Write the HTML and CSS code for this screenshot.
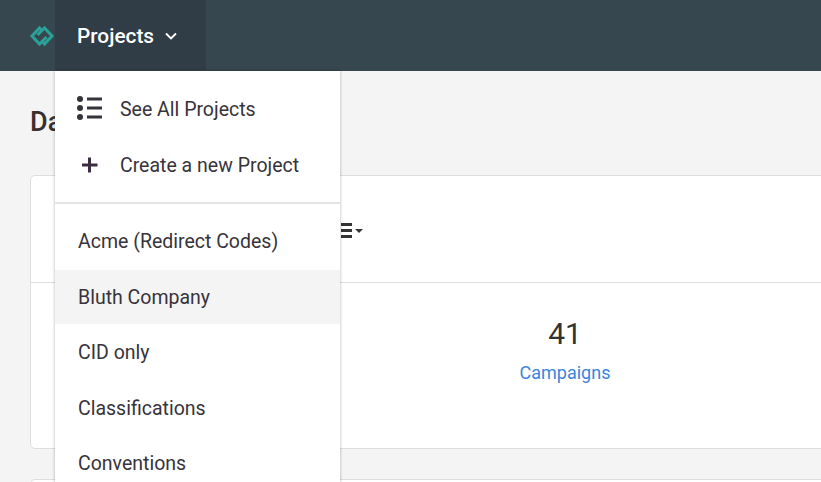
FILE: index.html
```html
<!DOCTYPE html>
<html lang="en">
<head>
<meta charset="utf-8">
<title>Dashboard</title>
<link rel="stylesheet" href="styles.css">
</head>
<body>
<header class="topbar">
  <a class="logo" href="#">
    <svg width="26" height="24" viewBox="0 0 26 24"><path d="M17.500 13 L10.500 20 L3 12 L10.500 4 L12 5.500 M8.500 11 L15.500 4 L23 12 L15.500 20 L14 18.500" fill="none" stroke="#2aa198" stroke-width="3"/></svg>
  </a>
  <button class="nav-active">Projects
    <svg class="chev" width="12" height="8" viewBox="0 0 12 8"><path d="M1 1.500 L6 6.500 L11 1.500" fill="none" stroke="#fff" stroke-width="1.900"/></svg>
  </button>
</header>
<main class="page">
  <h1 class="title">Dashboard</h1>
  <section class="card">
    <div class="card-head">
      <span class="menu-btn">
        <svg width="24" height="16" viewBox="0 0 24 16"><path d="M1 1.500H12M1 7.500H12M1 13.500H12" stroke="#333" stroke-width="3"/><path d="M15 6H23L19 10Z" fill="#333"/></svg>
      </span>
    </div>
    <div class="stats">
      <div class="stat"></div>
      <div class="stat"><div class="num">41</div><a class="stat-link" href="#">Campaigns</a></div>
    </div>
  </section>
  <section class="card"></section>
</main>
<nav class="dropdown">
  <div class="actions">
    <a class="item" href="#">
      <svg class="ico ico-list" width="25" height="24" viewBox="0 0 25 24"><circle cx="3" cy="3" r="3" fill="#37333b"/><circle cx="3" cy="12" r="3" fill="#37333b"/><circle cx="3" cy="21" r="3" fill="#37333b"/><path d="M10 3H25M10 12H25M10 21H25" stroke="#37333b" stroke-width="3"/></svg>
      See All Projects</a>
    <a class="item item-create" href="#">
      <svg class="ico" width="25" height="16" viewBox="0 0 25 16"><path d="M4 8H19.500M11.500 0.500V15.500" stroke="#3d2c42" stroke-width="3"/></svg>
      Create a new Project</a>
  </div>
  <div class="projects">
    <a class="item" href="#">Acme (Redirect Codes)</a>
    <a class="item is-hover" href="#">Bluth Company</a>
    <a class="item" href="#">CID only</a>
    <a class="item" href="#">Classifications</a>
    <a class="item" href="#">Conventions</a>
  </div>
</nav>
</body>
</html>
```
FILE: styles.css
```css
* { box-sizing: border-box; }
html, body { margin: 0; height: 100%; overflow: hidden; }
body { background: #f4f4f4; font-family: Roboto, sans-serif; color: #333; width: 821px; height: 482px; position: relative; }
.topbar { height: 71px; background: #37474f; display: flex; align-items: stretch; padding-left: 29px; }
.logo { width: 26px; display: flex; align-items: center; }
.nav-active { width: 151px; height: 70px; border: 0; background: #303c46; color: #fff; font: 500 20.8px Roboto, sans-serif; padding: 2px 0 0 22px; display: flex; align-items: center; text-align: left; }
.chev { margin-left: 11px; margin-top: 0; }
.page { padding: 0 0 0 30px; width: 1300px; }
.title { margin: 0; height: 104px; padding-top: 34px; font: 500 27px/34px Roboto, sans-serif; color: #3a2f2f; }
.card { background: #fff; border: 1px solid #ddd; border-radius: 5px; height: 274px; margin-bottom: 30px; }
.card-head { height: 107px; border-bottom: 1px solid #ddd; padding-left: 309px; padding-top: 47px; }
.menu-btn { display: block; line-height: 0; }
.stats { display: grid; grid-template-columns: 354px 360px 1fr; }
.stat { text-align: center; padding-top: 32px; }
.num { font-size: 30px; line-height: 38px; color: #333; }
.stat-link { display: block; margin-top: 9px; font-size: 18px; line-height: 22px; color: #3a85dc; text-decoration: none; }
.dropdown { position: absolute; left: 55px; top: 71px; width: 285px; height: 440px; background: #fff; box-shadow: 0 0 3px rgba(0,0,0,.3); }
.actions { height: 133px; padding-top: 11px; border-bottom: 2px solid #e4e4e4; display: flex; flex-direction: column; gap: 2px; }
.projects { padding-top: 10.700px; display: flex; flex-direction: column; gap: 1.500px; }
.item { display: flex; align-items: center; height: 54px; padding-left: 23px; font-size: 19.500px; color: #37333b; text-decoration: none; flex: none; }
.ico { margin-right: 17px; flex: none; }
.ico-list { margin-bottom: 2px; margin-left: -1px; margin-right: 18px; }
.is-hover { background: #f4f4f4; }
```
